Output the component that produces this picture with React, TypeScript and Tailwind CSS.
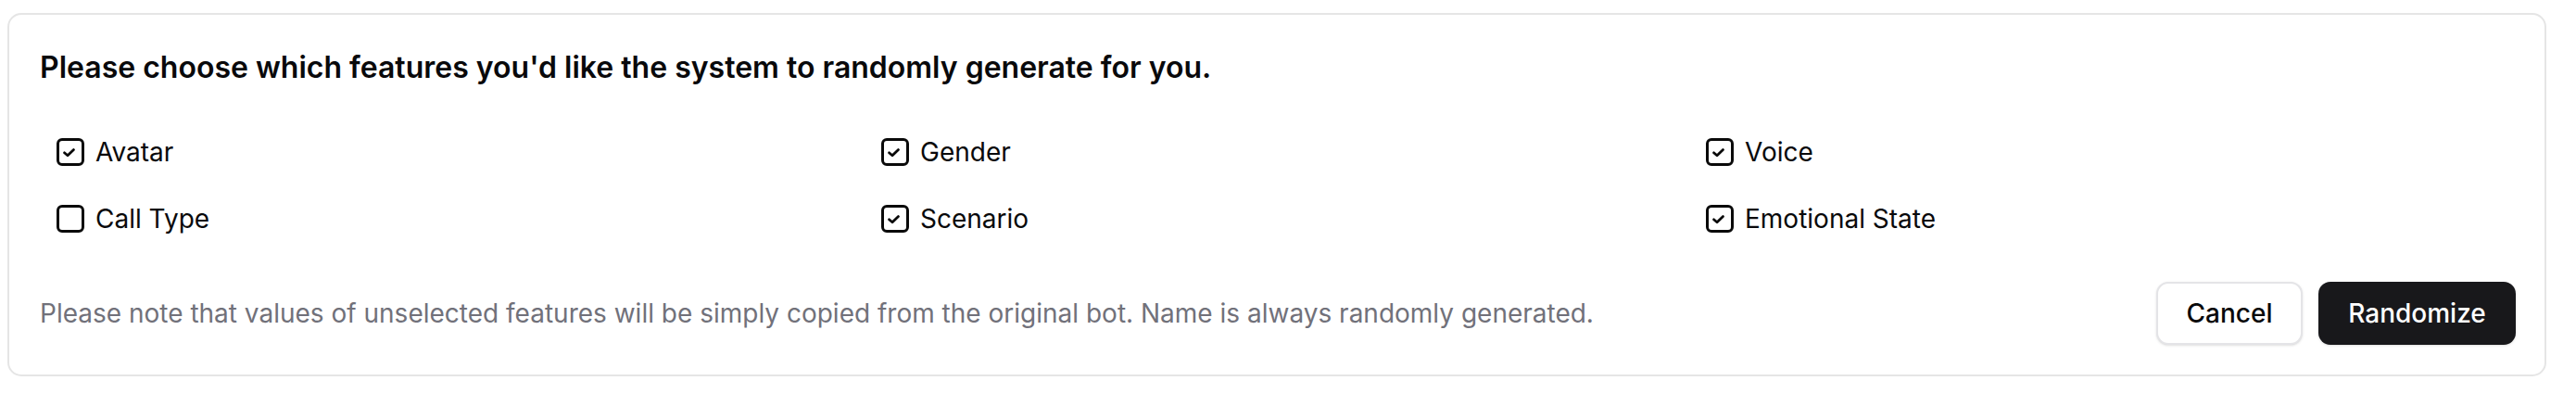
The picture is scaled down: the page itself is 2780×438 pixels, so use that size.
import React from "react";

const items: { label: string; checked: boolean }[] = [
  { label: "Avatar", checked: true },
  { label: "Gender", checked: true },
  { label: "Voice", checked: true },
  { label: "Call Type", checked: false },
  { label: "Scenario", checked: true },
  { label: "Emotional State", checked: true },
];

function Box({ checked }: { checked: boolean }) {
  return (
    <span className="flex h-[30px] w-[30px] shrink-0 items-center justify-center rounded-[6px] border-[3px] border-[#0a0a0a] bg-white">
      {checked && (
        <svg width="24" height="24" viewBox="0 0 24 24" fill="none">
          <path d="M5.5 12.8 L9 15.8 L15.5 9.6" stroke="#0a0a0a" strokeWidth="2.8" strokeLinecap="round" strokeLinejoin="round" />
        </svg>
      )}
    </span>
  );
}

export default function App() {
  return (
    <div className="min-h-[438px] w-[2780px] bg-white pl-[8px] pt-[14px]" style={{ fontFamily: "Inter, 'Noto Sans', sans-serif" }}>
      <div className="w-[2740px] overflow-hidden rounded-[15px] border-2 border-[#e5e5e5] bg-white pl-[33px] pr-[31px] pt-[34px] pb-[32px]">
        <h2 className="text-[32px] font-semibold leading-[45px] text-[#09090b]">
          Please choose which features you'd like the system to randomly generate for you.
        </h2>
        <div className="ml-[18px] mt-[46px] grid grid-cols-[repeat(3,890px)] gap-y-[27px]">
          {items.map((it) => (
            <label key={it.label} className="flex h-[45px] items-center gap-[12px]">
              <Box checked={it.checked} />
              <span className="text-[28px] leading-none text-[#09090b]">{it.label}</span>
            </label>
          ))}
        </div>
        <div className="mt-[46px] flex items-center justify-between">
          <p className="text-[28px] text-[#71717a]">
            Please note that values of unselected features will be simply copied from the original bot. Name is always randomly generated.
          </p>
          <div className="flex items-center gap-[17px]">
            <button className="flex h-[68px] w-[158px] items-center justify-center rounded-[13px] border-2 border-[#e4e4e7] bg-white text-[28px] font-medium text-[#09090b] shadow-sm">
              Cancel
            </button>
            <button className="flex h-[68px] w-[213px] items-center justify-center rounded-[13px] bg-[#18181b] text-[28px] font-medium text-white shadow-sm">
              Randomize
            </button>
          </div>
        </div>
      </div>
    </div>
  );
}
